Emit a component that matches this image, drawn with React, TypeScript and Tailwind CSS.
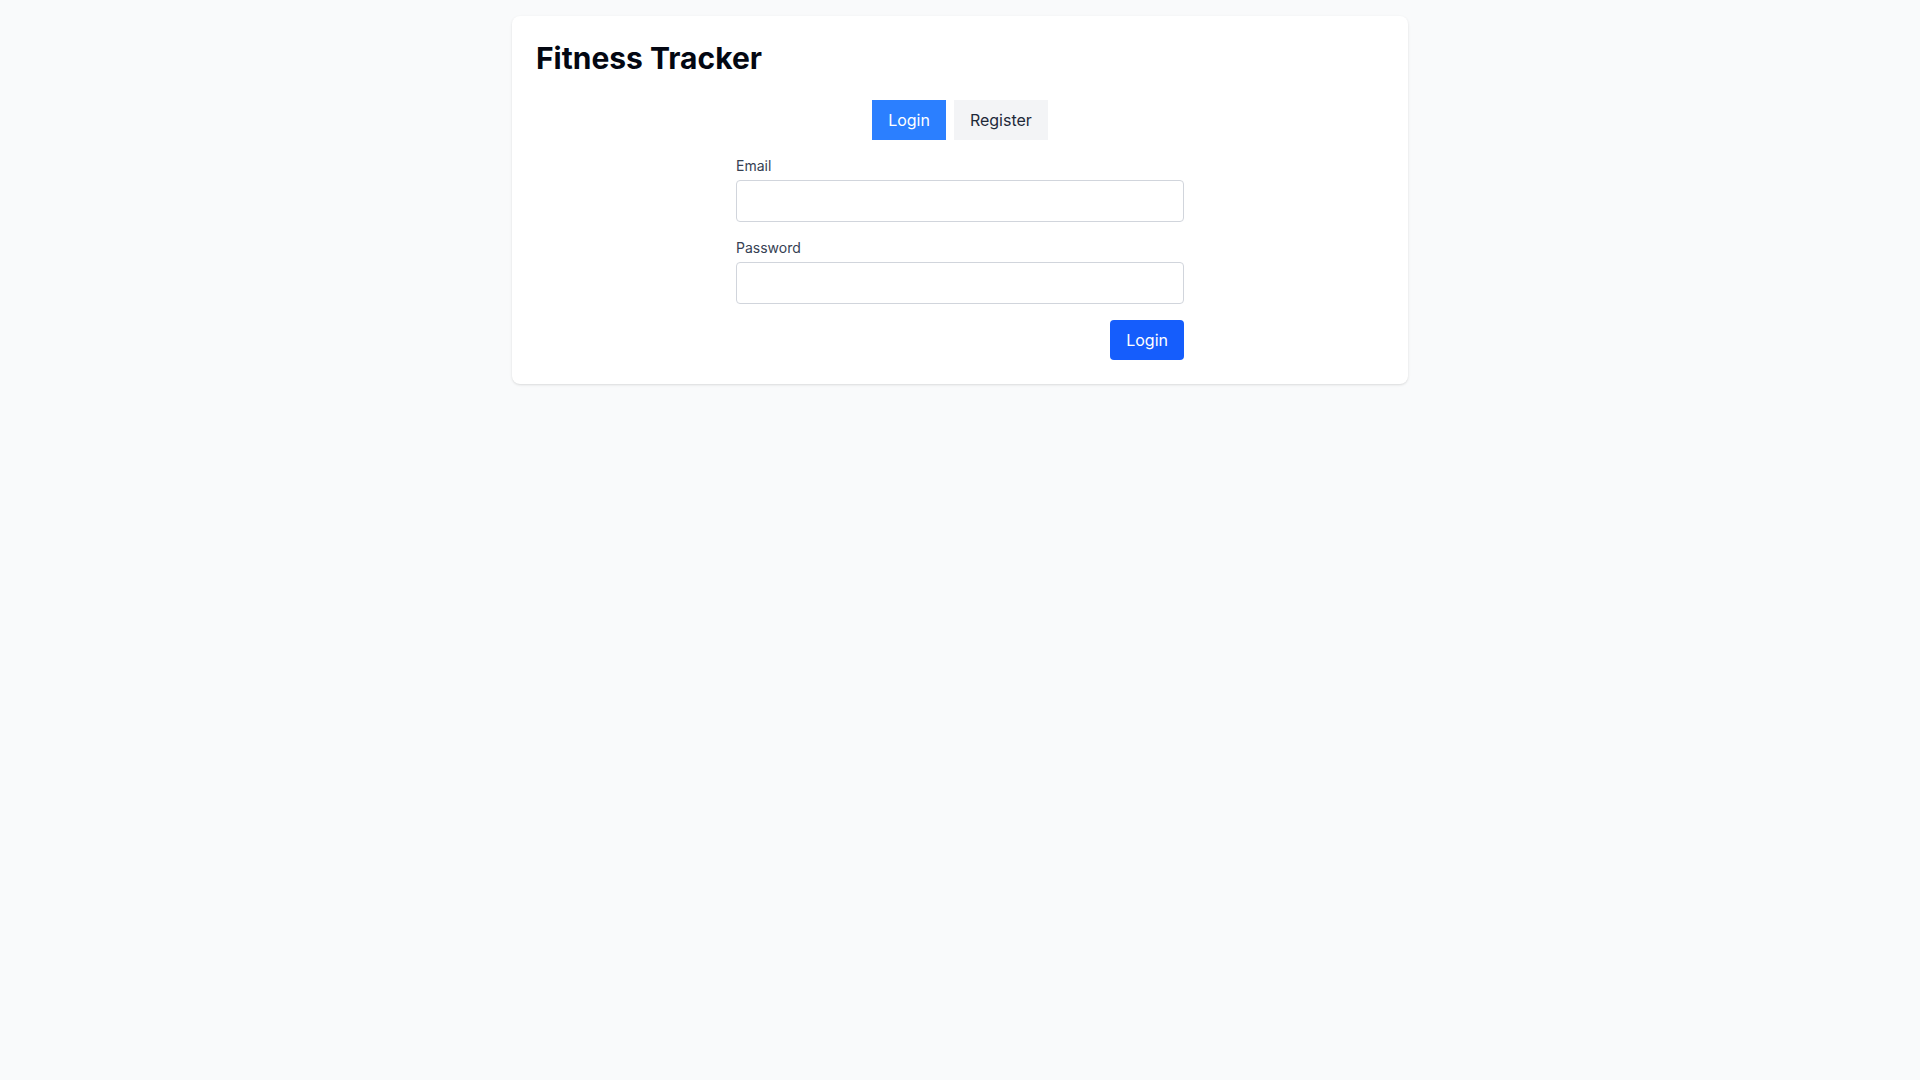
import { useState } from "react";

export default function App() {
  const [tab, setTab] = useState<"login" | "register">("login");
  const [email, setEmail] = useState("");
  const [password, setPassword] = useState("");

  return (
    <div className="min-h-screen bg-gray-50 p-4 font-['Inter',sans-serif]">
      <div className="mx-auto max-w-4xl rounded-lg bg-white p-6 shadow">
        <h1 className="mb-6 text-3xl font-bold text-gray-950">Fitness Tracker</h1>

        <div className="mb-4 flex justify-center gap-2">
          <button
            onClick={() => setTab("login")}
            className={
              tab === "login"
                ? "bg-blue-500 px-4 py-2 text-white"
                : "bg-gray-100 px-4 py-2 text-gray-800"
            }
          >
            Login
          </button>
          <button
            onClick={() => setTab("register")}
            className={
              tab === "register"
                ? "bg-blue-500 px-4 py-2 text-white"
                : "bg-gray-100 px-4 py-2 text-gray-800"
            }
          >
            Register
          </button>
        </div>

        <form
          className="mx-auto max-w-md"
          onSubmit={(e) => e.preventDefault()}
        >
          <div className="mb-4">
            <label className="mb-1 block text-sm text-gray-700">Email</label>
            <input
              type="email"
              value={email}
              onChange={(e) => setEmail(e.target.value)}
              className="w-full rounded border border-gray-300 px-3 py-2"
            />
          </div>
          <div className="mb-4">
            <label className="mb-1 block text-sm text-gray-700">Password</label>
            <input
              type="password"
              value={password}
              onChange={(e) => setPassword(e.target.value)}
              className="w-full rounded border border-gray-300 px-3 py-2"
            />
          </div>
          <div className="flex justify-end">
            <button
              type="submit"
              className="rounded bg-blue-600 px-4 py-2 text-white"
            >
              {tab === "login" ? "Login" : "Register"}
            </button>
          </div>
        </form>
      </div>
    </div>
  );
}
